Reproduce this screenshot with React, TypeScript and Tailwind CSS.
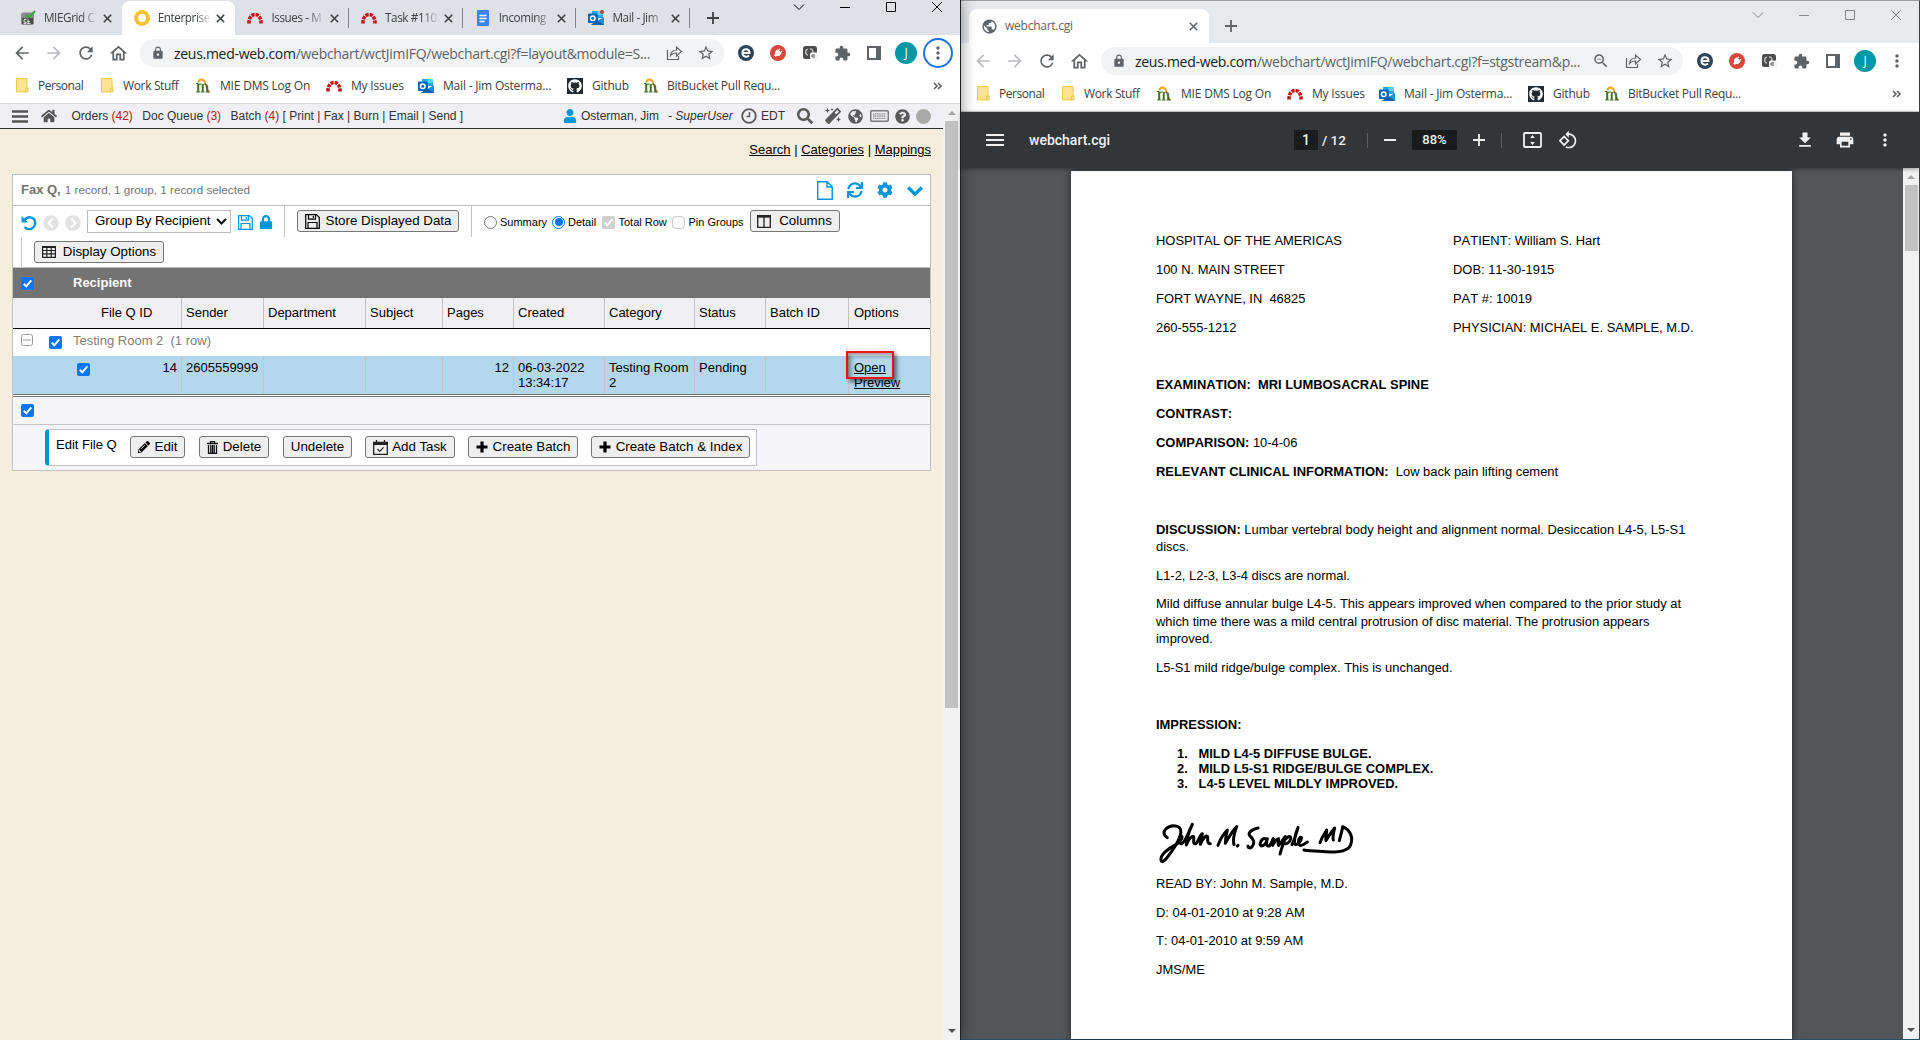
import type { ReactNode } from 'react';
import {
  FaHome, FaUser, FaSearch, FaMagic, FaGlobeAmericas, FaQuestionCircle,
  FaChevronCircleLeft, FaChevronCircleRight, FaLock, FaSync, FaCog,
  FaPencilAlt, FaGithub,
} from 'react-icons/fa';
import {
  MdArrowBack, MdArrowForward, MdRefresh, MdOutlineHome, MdLock, MdStarBorder, MdExtension,
  MdMoreVert, MdFileDownload, MdPrint, MdPublic, MdZoomOut, MdRotate90DegreesCcw, MdMenu, MdPower,
} from 'react-icons/md';

const UI = "font-['Open_Sans',sans-serif]";
const ARIAL = "font-['Liberation_Sans',Arial,sans-serif]";

/* ---------- favicons ---------- */

function RedmineIcon() {
  return (
    <svg width="16" height="16" viewBox="0 0 16 16" fill="none" className="shrink-0">
      <path d="M2 13.500C1.500 1.500 14.500 1.500 14 13.500" stroke="#c4151c" strokeWidth="3.600" strokeDasharray="3.300 .9" />
    </svg>
  );
}

function OutlookIcon({ badge = false }: { badge?: boolean }) {
  return (
    <svg width="16" height="16" viewBox="0 0 16 16" className="shrink-0">
      <path d="M4 1h11v7H4z" fill="#28a8ea" />
      <path d="M9.500 1H15v4H9.500z" fill="#50d9ff" />
      <path d="M4 5h6v5H4z" fill="#0078d4" />
      <path d="M3 15h13V7l-6.500 4z" fill="#1490df" />
      <path d="M3 15h13L9 10z" fill="#0f5ea8" />
      <rect x="0" y="3.500" width="9.500" height="9.500" rx="1" fill="#0364b8" />
      <circle cx="4.750" cy="8.200" r="2.300" fill="none" stroke="#fff" strokeWidth="1.500" />
      {badge && <circle cx="14" cy="2" r="2" fill="#e03030" />}
    </svg>
  );
}

function MieIcon() {
  return (
    <svg width="16" height="16" viewBox="0 0 16 16" fill="none" className="shrink-0">
      <path d="M3.500 4.500C4 .5 8.500.5 10 4.500" stroke="#f5a11f" strokeWidth="2" />
      <path d="M10 4.500c1 3.500 2.500 7.500 4.500 10" stroke="#dd5a2b" strokeWidth="1.300" />
      <path d="M3.200 5.500v8.500M7.700 7.500v6.500M12.200 7.500v6.500" stroke="#3f7324" strokeWidth="2" />
      <path d="M1 5.500h2M1.200 14h4M6 14h3.500M10.500 14h3.700M3.500 7.200c1.200-1.600 4.200-1.600 4.200.5 1-2.200 4.500-2.300 4.500.3" stroke="#3f7324" strokeWidth="1.100" />
    </svg>
  );
}

function FolderIcon() {
  return (
    <svg width="13" height="15" viewBox="0 0 13 15" className="shrink-0">
      <path d="M.5.5h10.500v9h1v4.500H.5z" fill="#ffe391" stroke="#ecc94b" />
      <path d="M9.500 14v-3.500H12" fill="none" stroke="#ecc94b" />
    </svg>
  );
}

function GearRingIcon() {
  return (
    <svg width="16" height="16" viewBox="0 0 16 16" fill="none" className="shrink-0">
      <circle cx="8" cy="8" r="5.700" stroke="#f7c52d" strokeWidth="3.600" />
      <circle cx="8" cy="8" r="7.300" stroke="#f2b91d" strokeWidth="1.200" strokeDasharray="2.600 1.220" />
    </svg>
  );
}

function SqlIcon() {
  return (
    <svg width="16" height="16" viewBox="0 0 16 16" fill="none" className="shrink-0">
      <rect x="1" y="2.500" width="13" height="12.500" rx="2" fill="#8a8a8a" />
      <path d="M2 8h11v6H2z" fill="#4a4a4a" />
      <path d="M6.500 9.500C4 8.500 3 12 5 12s1.500 2-1.500 1.500M8 9.500v4h2.500M8 11.500h2" stroke="#ddd" strokeWidth="1.200" />
      <path d="M6 4.500l3 3 6-6.500" stroke="#36a83a" strokeWidth="2" />
    </svg>
  );
}

function DocsIcon() {
  return (
    <svg width="12" height="16" viewBox="0 0 12 16" className="mx-0.5 shrink-0">
      <rect width="12" height="16" rx="1" fill="#3f83f8" />
      <path d="M2.500 5.500h7M2.500 8.500h7M2.500 11.500h5" stroke="#fff" strokeWidth="1.400" />
    </svg>
  );
}

function CloseIcon({ className }: { className: string }) {
  return (
    <svg width="9" height="9" viewBox="0 0 9 9" className={`shrink-0 ${className}`}>
      <path d="M.8.8l7.400 7.400M8.200.8L.8 8.200" stroke="currentColor" strokeWidth="1.600" />
    </svg>
  );
}

/* ---------- window chrome ---------- */

function WindowButtons({ className }: { className: string }) {
  return (
    <div className={`ml-auto flex ${className}`}>
      <span className="flex w-[46px] justify-center"><svg width="12" height="12" viewBox="0 0 12 12" fill="none"><path d="M1 3.500l5 5 5-5" stroke="currentColor" /></svg></span>
      <span className="flex w-[46px] justify-center"><svg width="12" height="12" viewBox="0 0 12 12"><path d="M1 6.500h10" stroke="currentColor" /></svg></span>
      <span className="flex w-[46px] justify-center"><svg width="12" height="12" viewBox="0 0 12 12" fill="none"><path d="M1.500 1.500h9v9h-9z" stroke="currentColor" /></svg></span>
      <span className="flex w-[46px] justify-center"><svg width="12" height="12" viewBox="0 0 12 12"><path d="M1 1l10 10M11 1L1 11" stroke="currentColor" /></svg></span>
    </div>
  );
}

function Cell({ children }: { children: ReactNode }) {
  return <span className="flex h-8 w-8 shrink-0 items-center justify-center">{children}</span>;
}

function ShareIcon() {
  return (
    <svg width="17" height="16" viewBox="0 0 17 16" fill="none" stroke="#5f6368" strokeWidth="1.200">
      <path d="M1.500 5v9.500h11V11" />
      <path d="M4.500 10.500C5 6.500 7.500 5 10.500 5V2l5 4.500-5 4.500V8c-3 0-4.500.5-6 2.500z" />
    </svg>
  );
}

function Toolbar({ path, zoomed, focusMenu, backMuted }: { path: string; zoomed?: boolean; focusMenu?: boolean; backMuted?: boolean }) {
  return (
    <div className="flex h-9 shrink-0 items-center px-1.5 text-[#5f6368]">
      <Cell><MdArrowBack className={backMuted ? 'size-5 text-[#b9bbbe]' : 'size-5'} /></Cell>
      <Cell><MdArrowForward className="size-5 text-[#b9bbbe]" /></Cell>
      <Cell><MdRefresh className="size-5" /></Cell>
      <Cell><MdOutlineHome className="size-[21px]" /></Cell>
      <div className="mx-1.5 flex h-7 min-w-0 flex-1 items-center rounded-full bg-[#f1f3f4] pl-[11px] pr-0.5">
        <MdLock className="size-3.5 shrink-0" />
        <span className={`ml-[9px] flex-1 whitespace-nowrap text-[14px] ${UI} tracking-[-0.290px]`}>
          <span className="text-[#202124]">zeus.med-web.com</span>{path}
        </span>
        {zoomed && <Cell><MdZoomOut className="size-[18px]" /></Cell>}
        <Cell><ShareIcon /></Cell>
        <Cell><MdStarBorder className="size-[18px]" /></Cell>
      </div>
      <Cell>
        <svg width="16" height="16" viewBox="0 0 16 16" fill="none">
          <circle cx="8" cy="8" r="8" fill="#2d4558" />
          <path d="M4.500 8h7c0-5-7-5-7 0 0 4 4.500 4.500 6.500 2.500" stroke="#fff" strokeWidth="2" />
        </svg>
      </Cell>
      <Cell><span className="flex size-4 items-center justify-center rounded-full bg-[#d9483b]"><MdPower className="size-3 rotate-45 text-white" /></span></Cell>
      <Cell>
        <svg width="16" height="16" viewBox="0 0 16 16" fill="none">
          <rect x="1" y="1" width="14" height="13" rx="2.500" fill="#4c4c4c" />
          <path d="M6 4.500c-3-1-3 6 0 5.500M8 4c3-1 4 5 1.500 6" stroke="#bbb" strokeWidth="1.500" />
          <rect x="8" y="7.500" width="8" height="7" rx="1.500" fill="#f4f4f4" />
          <path d="M13 10h-3v2h3" stroke="#555" />
        </svg>
      </Cell>
      <Cell><MdExtension className="size-[17px]" /></Cell>
      <Cell><svg width="14" height="14" viewBox="0 0 14 14"><path d="M1 1h12v12H1z" fill="none" stroke="#5f6368" strokeWidth="2" /><path d="M9 1h4v12H9z" fill="#5f6368" /></svg></Cell>
      <Cell><span className={`flex size-[22px] shrink-0 items-center justify-center rounded-full bg-[#0097a7] text-[12px] text-white ${UI}`}>J</span></Cell>
      <Cell>
        <span className={focusMenu ? 'flex size-[30px] shrink-0 items-center justify-center rounded-full border-2 border-[#1a73e8]' : 'flex size-[30px] items-center justify-center'}>
          <MdMoreVert className="size-5 shrink-0" />
        </span>
      </Cell>
    </div>
  );
}

function Bookmarks() {
  const items: { icon: ReactNode; label: string; width: string; gap: string }[] = [
    { icon: <FolderIcon />, label: 'Personal', width: 'w-[85px]', gap: 'ml-[9px] tracking-[-0.450px]' },
    { icon: <FolderIcon />, label: 'Work Stuff', width: 'w-[94px]', gap: 'ml-[9px] tracking-[-0.350px]' },
    { icon: <MieIcon />, label: 'MIE DMS Log On', width: 'w-[131px]', gap: 'ml-[9px]' },
    { icon: <RedmineIcon />, label: 'My Issues', width: 'w-[92px]', gap: 'ml-[9px]' },
    { icon: <OutlookIcon />, label: 'Mail - Jim Osterma...', width: 'w-[149px]', gap: 'ml-[9px]' },
    { icon: <span className="flex size-4 items-center justify-center bg-[#24292e]"><FaGithub className="size-3.5 text-white" /></span>, label: 'Github', width: 'w-[76px]', gap: 'ml-[9px]' },
    { icon: <MieIcon />, label: 'BitBucket Pull Requ...', width: 'w-[160px]', gap: 'ml-2 tracking-[-0.250px]' },
  ];
  return (
    <div className={`flex h-8 shrink-0 items-center pb-[3px] pl-4 text-[12px] text-[#3c4043] ${UI} tracking-[-0.200px]`}>
      {items.map((b) => (
        <span key={b.label} className={`flex shrink-0 items-center whitespace-nowrap ${b.width}`}>
          {b.icon}
          <span className={b.gap}>{b.label}</span>
        </span>
      ))}
      <svg width="9" height="8" viewBox="0 0 9 8" fill="none" className="ml-auto mr-[18px]">
        <path d="M1 1l3 3-3 3M5 1l3 3-3 3" stroke="#5f6368" strokeWidth="1.600" />
      </svg>
    </div>
  );
}

function LeftTabs() {
  const tabs = [
    { icon: <SqlIcon />, label: 'MIEGrid C', active: false, sep: false },
    { icon: <GearRingIcon />, label: 'Enterprise', active: true, sep: false },
    { icon: <RedmineIcon />, label: 'Issues - M', active: false, sep: true },
    { icon: <RedmineIcon />, label: 'Task #110', active: false, sep: true },
    { icon: <DocsIcon />, label: 'Incoming', active: false, sep: true },
    { icon: <OutlookIcon badge />, label: 'Mail - Jim', active: false, sep: true },
  ];
  return (
    <div className="flex h-[35px] shrink-0 bg-[#dee1e6] pl-2">
      {tabs.map((t) => (
        <div key={t.label} className={`mt-px flex h-[34px] w-[113.700px] shrink-0 items-center rounded-t-lg pl-3 ${t.active ? 'bg-white' : ''}`}>
          {t.icon}
          <span className={`ml-2 w-[54px] whitespace-nowrap text-[11.700px] text-[#3c4043] ${UI} tracking-[-0.400px] [mask-image:linear-gradient(to_right,black_68%,transparent)]`}>{t.label}</span>
          <CloseIcon className="ml-[4.500px] text-[#3c4043]" />
          {t.sep && <span className="ml-auto h-5 w-px bg-[#80868b]" />}
        </div>
      ))}
      <svg width="12" height="12" viewBox="0 0 12 12" className="ml-[17px] mt-3"><path d="M6 0v12M0 6h12" stroke="#3c4043" strokeWidth="1.800" /></svg>
      <WindowButtons className="mt-px text-black" />
    </div>
  );
}

function Arrow({ up, color }: { up?: boolean; color: string }) {
  return (
    <svg width="8" height="4" viewBox="0 0 8 4">
      <path d={up ? 'M0 4L4 0l4 4z' : 'M0 0l4 4 4-4z'} fill={color} />
    </svg>
  );
}

/* ---------- web application ---------- */

function AppHeader() {
  return (
    <div className={`flex h-[25px] shrink-0 items-center border-b border-[#2e2e2e] bg-[#f0eff4] pl-3 text-[12px] text-[#333] ${ARIAL}`}>
      <svg width="16" height="13" viewBox="0 0 16 13"><path d="M0 1.500h16M0 6.500h16M0 11.500h16" stroke="#555" strokeWidth="2.600" /></svg>
      <FaHome className="ml-[13px] size-4 text-[#555]" />
      <span className="ml-[14.500px] whitespace-pre">Orders <span className="text-[#b02020]">(42)</span></span>
      <span className="ml-[9.500px] whitespace-pre">Doc Queue <span className="text-[#b02020]">(3)</span></span>
      <span className="ml-[9.500px] whitespace-pre">Batch <span className="text-[#b02020]">(4)</span> [ Print | Fax | Burn | Email | Send ]</span>
      <div className="ml-auto flex items-center pr-3 text-[#5a5a5a]">
        <FaUser className="size-[14px] text-[#0095d9]" />
        <span className="ml-[4px] w-[87px] text-[#333]">Osterman, Jim</span>
        <span className="w-[73px] italic text-[#333]">- SuperUser</span>
        <svg width="16" height="16" viewBox="0 0 16 16" fill="none"><circle cx="8" cy="8" r="6.800" stroke="#5a5a5a" strokeWidth="1.800" /><path d="M8.500 4v4.500H5.500" stroke="#5a5a5a" strokeWidth="1.400" /></svg>
        <span className="ml-1 w-9 text-[#333]">EDT</span>
        <FaSearch className="size-4" />
        <FaMagic className="ml-3 size-4" />
        <FaGlobeAmericas className="ml-[7px] size-[15px]" />
        <svg width="19" height="12" viewBox="0 0 19 12" fill="none" className="ml-[7px]"><rect x=".75" y=".75" width="17.500" height="10.500" rx="1" stroke="#777" strokeWidth="1.500" /><path d="M3 3.800h13M3 6h13M3 8.400h13" stroke="#888" strokeWidth="1.300" strokeDasharray="1.400 .7" /></svg>
        <FaQuestionCircle className="ml-[6px] size-[15px]" />
        <span className="ml-1.5 size-[15px] rounded-full bg-[#aaa]" />
      </div>
    </div>
  );
}

function Check({ className = '' }: { className?: string }) {
  return (
    <svg width="13" height="13" viewBox="0 0 13 13" className={`shrink-0 ${className}`}>
      <rect width="13" height="13" rx="2" fill="#0075ff" />
      <path d="M2.800 6.800l2.500 2.500 5-6" fill="none" stroke="#fff" strokeWidth="2" />
    </svg>
  );
}

function SaveIcon() {
  return (
    <svg width="15" height="15" viewBox="0 0 15 15" fill="none" stroke="currentColor" strokeWidth="1.200">
      <path d="M.7.700h10.800l2.800 2.800v10.800H.7zM3.500.7v4.500h7V.700M3 14V8.500h9V14M8.300 2v2" />
    </svg>
  );
}

function PlusIcon() {
  return (
    <svg width="12" height="12" viewBox="0 0 12 12" className="mr-[5px]">
      <path d="M6 .5v11M.5 6h11" stroke="#000" strokeWidth="3.200" />
    </svg>
  );
}

function Button({ children, className }: { children: ReactNode; className: string }) {
  return (
    <button className={`-mt-px flex h-[22px] shrink-0 items-center justify-center whitespace-nowrap rounded-[3px] border border-[#767676] bg-[#efefef] text-[13.333px] leading-none text-black ${className}`}>
      {children}
    </button>
  );
}

function GridToolbar() {
  return (
    <div className="h-[62px] border-b border-[#c0c0c0] bg-white">
      <div className="flex h-[31px] items-center pl-2">
        <svg width="16" height="16" viewBox="0 0 16 16" fill="none" className="mt-0.5 text-[#0095d9]">
          <path d="M3 5.500C8-1 15.500 3.500 14 9.500 12.500 14.800 6.500 15.500 3.500 12" stroke="currentColor" strokeWidth="2.300" />
          <path d="M.5 1v6.500H7z" fill="currentColor" />
        </svg>
        <FaChevronCircleLeft className="ml-[6px] mt-0.5 size-4 text-[#e2e2e2]" />
        <FaChevronCircleRight className="ml-[6px] mt-0.5 size-4 text-[#e2e2e2]" />
        <span className="-mt-px ml-1.5 flex h-[23px] w-36 items-center border border-[#bbb] pl-[7px] text-[13.333px]">
          <span className="whitespace-nowrap">Group By Recipient</span>
          <svg width="11" height="7" viewBox="0 0 11 7" className="ml-[5px]"><path d="M1 1l4.500 4.500L10 1" fill="none" stroke="#111" strokeWidth="2" /></svg>
        </span>
        <span className="ml-[7px] mt-0.5 text-[#0095d9]"><SaveIcon /></span>
        <FaLock className="ml-[6px] mt-px size-[14px] text-[#0095d9]" />
        <span className="ml-[11px] h-[31px] w-px bg-[#c4c4c4]" />
        <Button className="ml-3 w-[162px]"><SaveIcon /><span className="ml-[6px]">Store Displayed Data</span></Button>
        <span className="ml-3 h-[31px] w-px bg-[#c4c4c4]" />
        <div className="flex items-center pt-px text-[11px]">
          <span className="ml-3 size-[13px] rounded-full border border-[#767676] bg-white" />
          <span className="ml-[3px] w-[52px]">Summary</span>
          <span className="flex size-[13px] items-center justify-center rounded-full border border-[#0075ff]"><span className="size-[8px] rounded-full bg-[#0075ff]" /></span>
          <span className="ml-[3px] w-[33.500px]">Detail</span>
          <svg width="13" height="13" viewBox="0 0 13 13"><rect width="13" height="13" rx="2" fill="#cfcfcf" /><path d="M2.800 6.800l2.500 2.500 5-6" fill="none" stroke="#fff" strokeWidth="2" /></svg>
          <span className="ml-[4px] w-[53px] whitespace-nowrap">Total Row</span>
          <span className="size-[13px] rounded-sm border border-[#ccc] bg-[#fafafa]" />
          <span className="ml-[4px] w-[61px] whitespace-nowrap">Pin Groups</span>
        </div>
        <Button className="w-[90px]">
          <svg width="14" height="13" viewBox="0 0 14 13"><path d="M.7 1.500h12.600v10.800H.7zM7 2v10" fill="none" stroke="#222" strokeWidth="1.300" /><path d="M0 0h14v2.500H0z" fill="#222" /></svg>
          <span className="ml-2">Columns</span>
        </Button>
      </div>
      <div className="flex h-[31px] items-center pl-2">
        <span className="h-[29px] w-px bg-[#c4c4c4]" />
        <Button className="ml-3 w-[130px]">
          <svg width="14" height="12" viewBox="0 0 14 12"><path d="M.6.600h12.800v10.800H.6zM.6 4.500h13M.6 7.800h13M4.800 1v11M9.200 1v11" fill="none" stroke="#222" strokeWidth="1.200" /><path d="M0 0h14v2H0z" fill="#222" /></svg>
          <span className="ml-[7px]">Display Options</span>
        </Button>
      </div>
    </div>
  );
}

const COLS = 'grid grid-cols-[169px_82px_102px_77px_71px_91px_90px_71px_83px_82px]';

function FaxGrid() {
  const headers = ['Sender', 'Department', 'Subject', 'Pages', 'Created', 'Category', 'Status', 'Batch ID'];
  return (
    <div className="ml-3 w-[919px] border border-[#c0c0c0] text-[13px] text-black">
      <div className="flex h-[31px] items-center border-b border-[#c0c0c0] bg-white pl-2 pr-[7px] text-[#737373]">
        <span className="font-bold">Fax Q,</span>
        <span className="ml-1 text-[11.700px]">1 record, 1 group, 1 record selected</span>
        <div className="ml-auto flex items-center text-[#0095d9]">
          <svg width="16" height="19" viewBox="0 0 16 19" fill="none" stroke="currentColor" strokeWidth="1.400"><path d="M.7.700h9.500l5 5v12.500H.7zM10 1v5h5" /></svg>
          <FaSync className="ml-[14px] size-4" />
          <FaCog className="ml-[14px] size-4" />
          <svg width="16" height="11" viewBox="0 0 16 11" fill="none" className="ml-[14px] mt-0.5"><path d="M1.200 1.500L8 8.200l6.800-6.700" stroke="currentColor" strokeWidth="3.300" /></svg>
        </div>
      </div>
      <GridToolbar />
      <div className="flex h-[30px] items-center bg-[#737373] pl-2">
        <Check />
        <span className="-mt-px ml-[39px] font-bold text-white">Recipient</span>
      </div>
      <div className={`${COLS} h-[31px] border-b border-black bg-[#f0eff4] leading-[29px]`}>
        <span className="border-r border-[#c4c4c4] pl-[88px]">File Q ID</span>
        {headers.map((h) => <span key={h} className="border-r border-[#c4c4c4] pl-1">{h}</span>)}
        <span className="pl-[5px]">Options</span>
      </div>
      <div className="flex h-[27px] items-start bg-white pl-2 text-[#808080]">
        <svg width="12" height="12" viewBox="0 0 12 12" className="mt-[5px]"><rect x=".5" y=".5" width="11" height="11" rx="2" fill="#fff" stroke="#999" /><path d="M2 6h8" stroke="#999" /></svg>
        <Check className="ml-4 mt-[7px]" />
        <span className="ml-[11px] mt-1 whitespace-pre leading-[15px]">Testing Room 2  (1 row)</span>
      </div>
      <div className={`${COLS} h-[38px] bg-[#b3d8ed] leading-[15px] *:border-r *:border-[#c4c4c4] *:pl-1 *:pt-1`}>
        <span className="flex justify-between pr-1"><Check className="ml-[60px] mt-[3px]" />14</span>
        <span>2605559999</span>
        <span />
        <span />
        <span className="pr-1 text-right">12</span>
        <span>06-03-2022<br />13:34:17</span>
        <span className="whitespace-nowrap">Testing Room<br />2</span>
        <span>Pending</span>
        <span />
        <span className="relative !border-r-0 !pl-[5px] underline">
          Open<br />Preview
          <span className="absolute left-[-3px] top-[-5px] h-[28px] w-12 border-2 border-[#ee1111] shadow-[3px_3px_4px_rgba(0,0,0,0.5),inset_3px_3px_4px_rgba(0,0,0,0.4)]" />
        </span>
      </div>
      <div className="h-[3px] border-y border-[#777] bg-white" />
      <div className="flex h-7 items-center border-b border-[#c4c4c4] bg-[#f5f5f9] pl-2"><Check /></div>
      <div className="flex h-[45px] bg-[#f5f5f9] pl-8 pt-1">
        <div className="flex h-[37px] w-[712px] items-center rounded-l-[4px] border border-l-4 border-[#c4c4c4] border-l-[#0095d9] bg-white pl-[7px]">
          <span className="mb-[5px] w-[74px]">Edit File Q</span>
          <Button className="w-[55px]"><FaPencilAlt className="mr-[5px] size-3" />Edit</Button>
          <Button className="ml-3.5 w-[70px]">
            <svg width="11" height="13" viewBox="0 0 11 13" className="mr-[5px]"><path d="M0 2.500h11M3.500 2V.700h4V2M1.500 4v8.300h8V4M3.800 4v8M5.500 4v8M7.200 4v8" fill="none" stroke="#111" strokeWidth="1.300" /></svg>
            Delete
          </Button>
          <Button className="ml-3.5 w-[69px]">Undelete</Button>
          <Button className="ml-[13px] w-[90px]">
            <svg width="15" height="15" viewBox="0 0 15 15" className="mr-1"><path d="M.7 2.500h13.600v11.800H.7zM3.500 0v3.500M11.500 0v3.500" fill="none" stroke="#222" strokeWidth="1.300" /><path d="M.7 2.500h13.600V5H.7z" fill="#222" /><path d="M4.500 9l2.300 2.300 3.700-4" fill="none" stroke="#222" strokeWidth="1.200" /></svg>
            Add Task
          </Button>
          <Button className="ml-[13px] w-[110px]"><PlusIcon />Create Batch</Button>
          <Button className="ml-[13px] w-[159px]"><PlusIcon />Create Batch &amp; Index</Button>
        </div>
      </div>
    </div>
  );
}

function LeftWindow() {
  return (
    <div className="z-10 flex w-[961px] shrink-0 flex-col border-r border-[#1f2224] bg-white shadow-[0_0_14px_rgba(0,0,0,0.45)]">
      <LeftTabs />
      <Toolbar path="/webchart/wctJimIFQ/webchart.cgi?f=layout&module=S..." focusMenu />
      <Bookmarks />
      <div className="h-px shrink-0 bg-[#d5d7da]" />
      <div className="flex min-h-0 flex-1">
        <div className={`flex w-[943px] flex-col bg-[#f5eddd] ${ARIAL}`}>
          <AppHeader />
          <div className="flex h-[45px] items-center justify-end pb-[3px] pr-3 text-[13px] text-black">
            <span className="whitespace-pre"><u>Search</u> | <u>Categories</u> | <u>Mappings</u></span>
          </div>
          <FaxGrid />
        </div>
        <div className="flex flex-1 flex-col items-center bg-[#f1f1f1] pt-[7px]">
          <Arrow up color="#a3a3a3" />
          <div className="mt-1.5 h-[587px] w-[13px] bg-[#c1c1c1]" />
          <div className="mb-[7px] mt-auto"><Arrow color="#505050" /></div>
        </div>
      </div>
    </div>
  );
}

/* ---------- PDF viewer ---------- */

function Signature() {
  return (
    <svg width="200" height="44" viewBox="80 95 600 132" fill="none" stroke="#000" strokeWidth="9" strokeLinecap="round" strokeLinejoin="round">
      <path d="M114 145C88 128 118 104 144 111c24 8 2 48-15 72-15 22-30 42-34 30-4-16 22-36 46-48 18-10 20-26 14-26-8 2-8 26 2 24 12-4 22-40 32-58-12 26-18 44-18 62 8-22 20-30 22-24 2 8-4 22 6 20 10-6 12-28 20-30-2 12-6 26-6 32 8-20 20-30 22-22 0 8-2 20 8 20" />
      <path d="M266 168c8-22 20-38 28-46-4 16-6 30-6 40 10-18 24-40 34-50-6 18-14 38-8 54M324 170l2-2" />
      <path d="M386 116c-14 2-34 14-24 24 10 8 16 20 6 32-4 6-12 4-12-2M408 148c-12-2-20 18-12 22 10 0 16-14 18-22-4 14-4 24 6 22 6-8 8-16 12-22 0 10-4 16-2 20 6-10 12-22 18-20 0 10-4 16 0 20 8-8 14-20 20-26-6 20-12 38-16 52M462 160c8-18 24-24 22-12-2 12-14 18-20 14M488 166c8-14 14-38 18-52-10 24-14 50-6 52 8-2 18-16 16-22-8-2-12 18-4 24 8 2 16-6 22-10" />
      <path d="M572 160c6-18 14-28 20-38 0 12-4 24-2 32 8-16 18-28 26-38-4 14-6 28-4 36M630 154c4-16 8-28 10-42 24 10 32 34 24 54-8 24-54 24-94 20-20-1-34-2-46-4" />
    </svg>
  );
}

function Para({ children, top = 'mt-[11.600px]' }: { children: ReactNode; top?: string }) {
  return <p className={`whitespace-pre leading-[17.300px] ${top}`}>{children}</p>;
}

function PdfPage() {
  return (
    <div className={`ml-[110px] mt-[3px] w-[721px] shrink-0 bg-white pl-[85px] pt-[61px] text-[12.930px] text-black shadow-[0_0_7px_rgba(0,0,0,0.6)] [font-kerning:none] ${ARIAL}`}>
      <div className="grid grid-cols-[297px_1fr] gap-y-[11.600px] whitespace-pre leading-[17.300px]">
        <span>HOSPITAL OF THE AMERICAS</span><span>PATIENT: William S. Hart</span>
        <span>100 N. MAIN STREET</span><span>DOB: 11-30-1915</span>
        <span>FORT WAYNE, IN  46825</span><span>PAT #: 10019</span>
        <span>260-555-1212</span><span>PHYSICIAN: MICHAEL E. SAMPLE, M.D.</span>
      </div>
      <Para top="mt-[40.500px]"><b>EXAMINATION:  MRI LUMBOSACRAL SPINE</b></Para>
      <Para><b>CONTRAST:</b></Para>
      <Para><b>COMPARISON:</b> 10-4-06</Para>
      <Para><b>RELEVANT CLINICAL INFORMATION:</b>  Low back pain lifting cement</Para>
      <Para top="mt-[40.500px]"><b>DISCUSSION:</b> Lumbar vertebral body height and alignment normal. Desiccation L4-5, L5-S1{'\n'}discs.</Para>
      <Para top="mt-[11.300px]">L1-2, L2-3, L3-4 discs are normal.</Para>
      <Para top="mt-[11.300px]">Mild diffuse annular bulge L4-5. This appears improved when compared to the prior study at{'\n'}which time there was a mild central protrusion of disc material. The protrusion appears{'\n'}improved.</Para>
      <Para top="mt-[11.300px]">L5-S1 mild ridge/bulge complex. This is unchanged.</Para>
      <Para top="mt-[40.500px]"><b>IMPRESSION:</b></Para>
      <ol className="mt-[12.500px] list-none font-bold leading-[15px]">
        <li className="flex"><span className="ml-[21px] w-[21.500px]">1.</span>MILD L4-5 DIFFUSE BULGE.</li>
        <li className="flex"><span className="ml-[21px] w-[21.500px]">2.</span>MILD L5-S1 RIDGE/BULGE COMPLEX.</li>
        <li className="flex"><span className="ml-[21px] w-[21.500px]">3.</span>L4-5 LEVEL MILDLY IMPROVED.</li>
      </ol>
      <div className="mt-[29.500px] h-[44px]"><Signature /></div>
      <Para top="mt-[10px]">READ BY: John M. Sample, M.D.</Para>
      <Para>D: 04-01-2010 at 9:28 AM</Para>
      <Para>T: 04-01-2010 at 9:59 AM</Para>
      <Para>JMS/ME</Para>
    </div>
  );
}

function PdfToolbar() {
  return (
    <div className="z-10 flex h-14 shrink-0 items-center bg-[#323639] pl-[22px] font-['Roboto',sans-serif] text-[14px] font-medium text-[#f1f1f1] shadow-[0_1px_4px_rgba(0,0,0,0.4)]">
      <MdMenu className="size-6" />
      <span className="ml-[22px] w-[265px]">webchart.cgi</span>
      <span className="flex h-5 w-6 items-center justify-center bg-[#191b1c]">1</span>
      <span className="ml-1 w-[45px] whitespace-pre text-[13.500px]">/ 12</span>
      <span className="h-[15px] w-px bg-[#5c5f62]" />
      <span className="ml-4 h-0.5 w-3 bg-[#f1f1f1]" />
      <span className="ml-4 flex h-5 w-[45px] items-center justify-center bg-[#191b1c] text-[13px]">88%</span>
      <svg width="12" height="12" viewBox="0 0 12 12" className="ml-4"><path d="M6 0v12M0 6h12" stroke="#f1f1f1" strokeWidth="1.800" /></svg>
      <span className="ml-4 h-[15px] w-px bg-[#5c5f62]" />
      <svg width="19" height="16" viewBox="0 0 19 16" className="ml-[21px]"><rect x="1" y="1" width="17" height="14" rx="1" fill="none" stroke="#f1f1f1" strokeWidth="1.800" /><path d="M9.500 3l2.300 3H7.200zM9.500 13l2.300-3H7.200z" fill="#f1f1f1" /></svg>
      <MdRotate90DegreesCcw className="ml-[16px] size-5" />
      <MdFileDownload className="ml-auto size-5" />
      <MdPrint className="ml-5 size-5" />
      <MdMoreVert className="ml-5 mr-[24.500px] size-5" />
    </div>
  );
}

function RightWindow() {
  return (
    <div className="flex min-w-0 flex-1 flex-col border-b border-r border-t border-b-[#24506f] border-r-[#3c3f41] border-t-[#9c9fa3] bg-white">
      <div className="flex h-[42px] shrink-0 bg-[#e7eaed] pl-2">
        <div className={`mt-2 flex w-60 items-center rounded-t-lg bg-white pl-3 text-[12px] text-[#5f6368] ${UI} tracking-[-0.250px]`}>
          <MdPublic className="size-[17px]" />
          <span className="ml-[7px]">webchart.cgi</span>
          <CloseIcon className="ml-auto mr-[11px]" />
        </div>
        <svg width="12" height="12" viewBox="0 0 12 12" className="ml-4 mt-[19px]"><path d="M6 0v12M0 6h12" stroke="#5f6368" strokeWidth="1.800" /></svg>
        <WindowButtons className="mt-2 text-[#85888b]" />
      </div>
      <Toolbar path="/webchart/wctJimIFQ/webchart.cgi?f=stgstream&p..." zoomed backMuted />
      <Bookmarks />
      <div className="h-px shrink-0 bg-[#d5d7da]" />
      <PdfToolbar />
      <div className="flex min-h-0 flex-1 bg-[#525659]">
        <PdfPage />
        <div className="ml-auto flex w-[16px] flex-col items-center bg-[#f1f1f1] pt-[7px]">
          <Arrow up color="#a3a3a3" />
          <div className="mt-1.5 h-[66px] w-[13px] bg-[#c1c1c1]" />
          <div className="mb-[7px] mt-auto"><Arrow color="#505050" /></div>
        </div>
      </div>
    </div>
  );
}

export default function App() {
  return (
    <div className="flex h-[1040px] w-[1920px] overflow-hidden bg-[#525659]">
      <LeftWindow />
      <RightWindow />
    </div>
  );
}
